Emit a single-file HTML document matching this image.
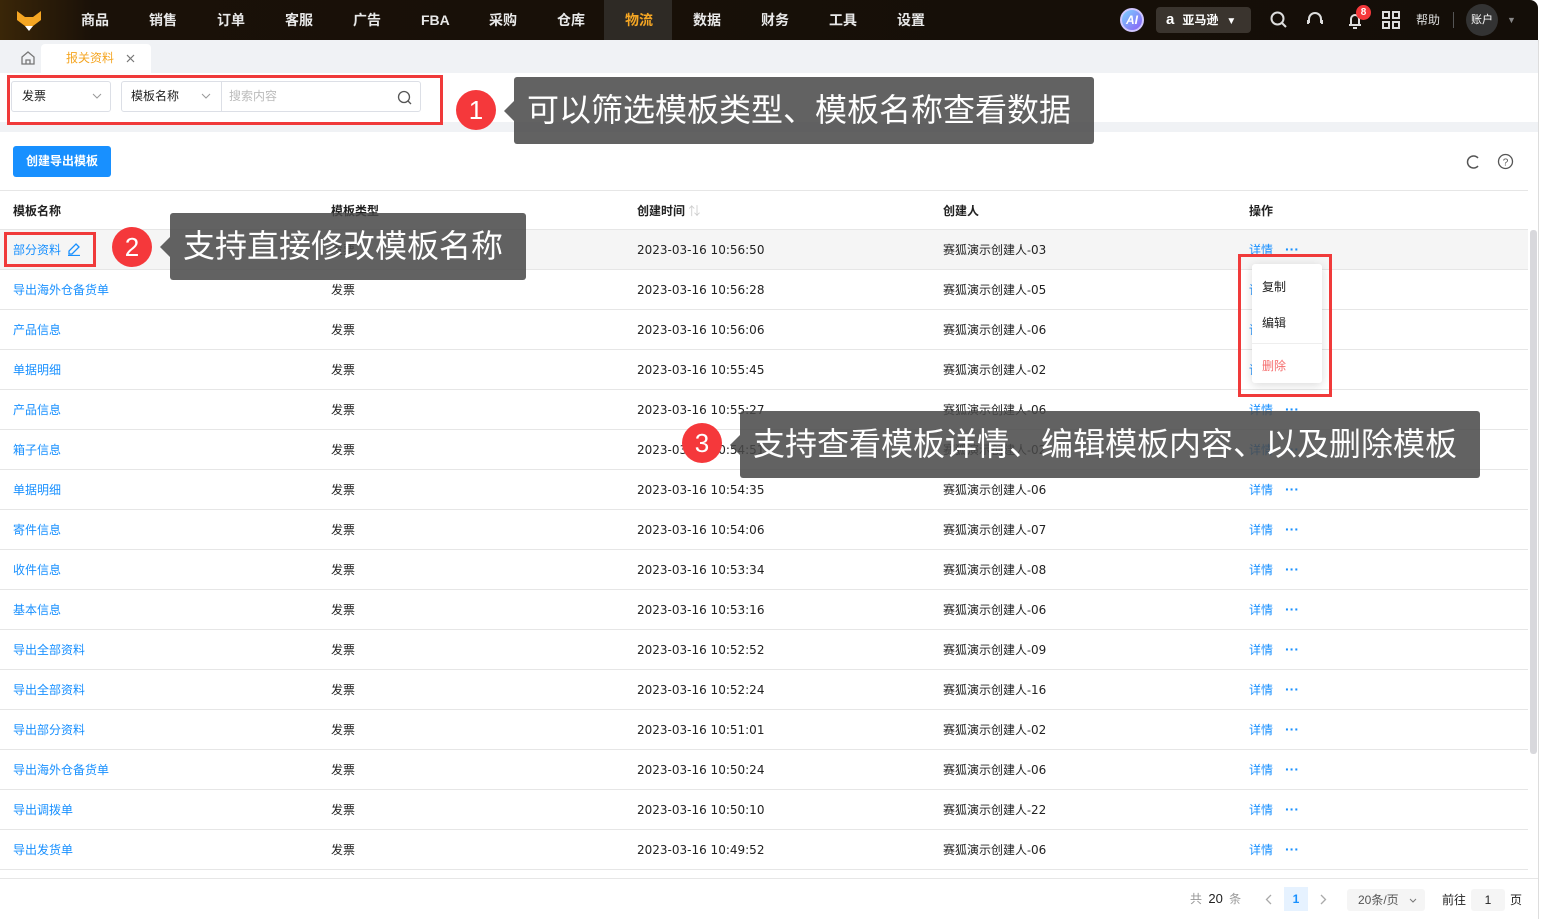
<!DOCTYPE html>
<html><head><meta charset="utf-8"><style>
*{margin:0;padding:0;box-sizing:border-box}
body{width:1545px;height:919px;overflow:hidden;background:#fff;font-family:"Liberation Sans","Noto Sans CJK SC",sans-serif;font-size:12px;color:#222;position:relative}
.abs{position:absolute}
.nav{left:0;top:0;width:1538px;height:40px;background:linear-gradient(90deg,#3a2608 0,#1a1108 6%,#140e08 100%);border-top-right-radius:8px}
.nav .it{position:absolute;top:0;height:40px;line-height:40px;color:#e8e8e8;font-size:14px;font-weight:bold}
.tabbar{left:0;top:40px;width:1538px;height:33px;background:#f0f2f5}
.row{position:absolute;left:0;width:1528px;height:40px;border-bottom:1px solid #e6e6e6;line-height:40px;font-size:12px}
.row span{position:absolute;top:0}
.dt{font-family:"DejaVu Sans",sans-serif;font-size:12px}
.lnk{color:#1890ff}
.tip{position:absolute;background:rgba(72,72,72,0.86);color:#fff;font-size:32px;border-radius:3px;white-space:nowrap}
.tip:before{content:"";position:absolute;left:-10px;top:50%;margin-top:-10px;border:10px solid transparent;border-left:0;border-right-color:rgba(72,72,72,0.86)}
.num{position:absolute;width:40px;height:40px;border-radius:50%;background:#f5383b;color:#fff;font-size:26px;text-align:center;line-height:40px}
.redbox{position:absolute;border:3px solid #f03a3a}
</style></head><body>
<div class="abs nav">
  <svg class="abs" style="left:16px;top:10px" width="26" height="22" viewBox="0 0 26 22"><path d="M1 1 L9 7 L17 7 L25 1 L25 10 L13 19 L1 10Z" fill="#f5a623"/><path d="M9 16 L13 21 L17 16Z" fill="#fff"/></svg>
  <div class="it" style="left:81px">商品</div><div class="it" style="left:149px">销售</div><div class="it" style="left:217px">订单</div><div class="it" style="left:285px">客服</div><div class="it" style="left:353px">广告</div><div class="it" style="left:421px">FBA</div><div class="it" style="left:489px">采购</div><div class="it" style="left:557px">仓库</div>
  <div class="abs" style="left:604px;top:0;width:68px;height:40px;background:#2e2a25"></div>
  <div class="it" style="left:625px;color:#f5a623">物流</div><div class="it" style="left:693px">数据</div><div class="it" style="left:761px">财务</div><div class="it" style="left:829px">工具</div><div class="it" style="left:897px">设置</div>
  <div class="abs" style="left:1120px;top:8px;width:24px;height:24px;border-radius:50%;background:linear-gradient(135deg,#7bd3ff,#8a5cf6);color:#fff;font-weight:bold;font-style:italic;font-size:12px;text-align:center;line-height:20px;border:2px solid #cfc6ff">AI</div>
  <div class="abs" style="left:1156px;top:7px;width:95px;height:26px;background:#3a342e;border-radius:4px;color:#fff;font-size:12px;line-height:26px;font-weight:bold"><span style="margin-left:10px;font-size:15px">a</span><span style="margin-left:8px">亚马逊</span><span style="margin-left:8px;font-size:10px">▼</span></div>
  <svg class="abs" style="left:1270px;top:11px" width="18" height="18" viewBox="0 0 18 18" fill="none" stroke="#ddd" stroke-width="2"><circle cx="7.5" cy="7.5" r="6"/><path d="M12 12 L16 16"/></svg>
  <svg class="abs" style="left:1305px;top:10px" width="20" height="20" viewBox="0 0 20 20" fill="none" stroke="#ddd" stroke-width="2"><path d="M4 13 V9 a6 6 0 0 1 12 0 V13"/><path d="M3 10 v4 M17 10 v4"/></svg>
  <svg class="abs" style="left:1345px;top:10px" width="20" height="20" viewBox="0 0 20 20" fill="none" stroke="#ddd" stroke-width="2"><path d="M4 15 h12 M6 15 V9 a4 4 0 0 1 8 0 V15 M8 18 h4"/></svg>
  <div class="abs" style="left:1356px;top:5px;width:15px;height:15px;border-radius:50%;background:#f5383b;color:#fff;font-size:10px;text-align:center;line-height:15px;font-weight:bold">8</div>
  <svg class="abs" style="left:1382px;top:11px" width="18" height="18" viewBox="0 0 18 18" fill="none" stroke="#ddd" stroke-width="2"><rect x="1" y="1" width="6" height="6"/><rect x="11" y="1" width="6" height="6"/><rect x="1" y="11" width="6" height="6"/><rect x="11" y="11" width="6" height="6"/></svg>
  <div class="abs" style="left:1416px;top:0;line-height:40px;color:#ddd;font-size:12px">帮助</div>
  <div class="abs" style="left:1453px;top:12px;width:1px;height:16px;background:#555"></div>
  <div class="abs" style="left:1466px;top:4px;width:32px;height:32px;border-radius:50%;background:#333;color:#fff;font-size:11px;text-align:center;line-height:32px">账户</div>
  <div class="abs" style="left:1507px;top:0;line-height:40px;color:#888;font-size:9px">▼</div>
</div>
<div class="abs tabbar">
  <svg class="abs" style="left:21px;top:11px" width="14" height="14" viewBox="0 0 14 14" fill="none" stroke="#777" stroke-width="1.3"><path d="M1 6 L7 1 L13 6 V13 H1Z M5 13 V9 H9 V13"/></svg>
  <div class="abs" style="left:41px;top:4px;width:110px;height:29px;background:#fff;border-radius:4px 4px 0 0"></div>
  <div class="abs" style="left:66px;top:4px;line-height:29px;color:#f5a623;font-size:12px">报关资料</div>
  <svg class="abs" style="left:126px;top:14px" width="9" height="9" viewBox="0 0 9 9" stroke="#777" stroke-width="1.2"><path d="M1 1 L8 8 M8 1 L1 8"/></svg>
</div>
<div class="abs" style="left:0;top:122px;width:1538px;height:10px;background:#f0f2f5"></div>
<div class="abs" style="left:1538px;top:40px;width:7px;height:879px;background:#fff;border-left:1px solid #ddd"></div>
<!-- filters -->
<div class="abs" style="left:11px;top:81px;width:100px;height:31px;border:1px solid #dcdfe6;border-radius:3px;line-height:29px;padding-left:10px">发票</div>
<svg class="abs" style="left:92px;top:93px" width="10" height="6" viewBox="0 0 10 6" fill="none" stroke="#999"><path d="M1 1 L5 5 L9 1"/></svg>
<div class="abs" style="left:121px;top:81px;width:300px;height:31px;border:1px solid #dcdfe6;border-radius:3px;line-height:29px"><span style="position:absolute;left:9px">模板名称</span><span style="position:absolute;left:99px;top:0;width:1px;height:29px;background:#dcdfe6"></span><span style="position:absolute;left:107px;color:#bbb">搜索内容</span></div>
<svg class="abs" style="left:201px;top:93px" width="10" height="6" viewBox="0 0 10 6" fill="none" stroke="#999"><path d="M1 1 L5 5 L9 1"/></svg>
<svg class="abs" style="left:397px;top:90px" width="16" height="16" viewBox="0 0 16 16" fill="none" stroke="#555" stroke-width="1.3"><circle cx="7" cy="7" r="5.5"/><path d="M11 11 L14 14"/></svg>
<div class="redbox" style="left:7px;top:75px;width:436px;height:50px"></div>
<!-- toolbar -->
<div class="abs" style="left:13px;top:146px;width:98px;height:31px;background:#1890ff;border-radius:3px;color:#fff;text-align:center;line-height:31px;font-weight:bold">创建导出模板</div>
<svg class="abs" style="left:1465px;top:154px" width="16" height="16" viewBox="0 0 16 16" fill="none" stroke="#555" stroke-width="1.5"><path d="M13 4 A6 6 0 1 0 13 12"/></svg>
<svg class="abs" style="left:1497px;top:153px" width="17" height="17" viewBox="0 0 17 17" fill="none" stroke="#555" stroke-width="1.3"><circle cx="8.5" cy="8.5" r="7"/><text x="8.5" y="12.5" font-size="10" text-anchor="middle" fill="#555" stroke="none" font-family="Liberation Sans">?</text></svg>
<!-- table -->
<div class="row" style="top:190px;border-top:1px solid #e6e6e6;font-weight:bold;height:40px"><span style="left:13px">模板名称</span><span style="left:331px">模板类型</span><span style="left:637px">创建时间 <span style="position:static;color:#ccc;font-weight:normal">⇅</span></span><span style="left:943px">创建人</span><span style="left:1249px">操作</span></div>
<div id="rows"></div>
<div class="abs" style="left:1530px;top:230px;width:7px;height:524px;background:#d8d8dc;border-radius:3px"></div>
<div class="abs" style="left:0;top:878px;width:1538px;height:1px;background:#e6e6e6"></div>
<!-- pagination -->
<div class="abs" style="left:1190px;top:890px;line-height:18px;color:#999">共 <span style="color:#222;margin:0 3px;font-size:13px">20</span> 条</div>
<svg class="abs" style="left:1265px;top:894px" width="7" height="11" viewBox="0 0 7 11" fill="none" stroke="#aaa" stroke-width="1.3"><path d="M6 1 L1.5 5.5 L6 10"/></svg>
<div class="abs" style="left:1284px;top:887px;width:24px;height:24px;background:#e6f2ff;color:#1890ff;text-align:center;line-height:24px;font-weight:bold">1</div>
<svg class="abs" style="left:1320px;top:894px" width="7" height="11" viewBox="0 0 7 11" fill="none" stroke="#aaa" stroke-width="1.3"><path d="M1 1 L5.5 5.5 L1 10"/></svg>
<div class="abs" style="left:1347px;top:889px;width:78px;height:22px;background:#f5f5f5;border-radius:3px;color:#555;line-height:22px;padding-left:11px">20条/页</div>
<svg class="abs" style="left:1409px;top:898px" width="8" height="5" viewBox="0 0 8 5" fill="none" stroke="#777"><path d="M1 1 L4 4 L7 1"/></svg>
<div class="abs" style="left:1442px;top:889px;line-height:22px">前往</div>
<div class="abs" style="left:1471px;top:889px;width:34px;height:22px;background:#f5f5f5;border-radius:3px;text-align:center;line-height:22px">1</div>
<div class="abs" style="left:1510px;top:889px;line-height:22px">页</div>
<!-- dropdown -->
<div class="abs" style="left:1252px;top:264px;width:70px;height:119px;background:#fff;border-radius:3px;box-shadow:0 2px 10px rgba(0,0,0,0.15)">
  <div class="abs" style="left:10px;top:14px">复制</div><div class="abs" style="left:10px;top:50px">编辑</div>
  <div class="abs" style="left:0;top:79px;width:70px;height:1px;background:#eee"></div>
  <div class="abs" style="left:10px;top:93px;color:#f56c6c">删除</div>
</div>
<div class="redbox" style="left:1238px;top:254px;width:94px;height:143px"></div>
<div class="redbox" style="left:4px;top:232px;width:92px;height:35px"></div>
<!-- tips -->
<div class="num" style="left:456px;top:90px">1</div>
<div class="tip" style="left:514px;top:77px;width:580px;height:67px;line-height:67px;padding-left:13px">可以筛选模板类型、模板名称查看数据</div>
<div class="num" style="left:112px;top:227px">2</div>
<div class="tip" style="left:170px;top:213px;width:356px;height:67px;line-height:67px;padding-left:13px">支持直接修改模板名称</div>
<div class="num" style="left:682px;top:423px">3</div>
<div class="tip" style="left:740px;top:411px;width:740px;height:67px;line-height:67px;padding-left:13px">支持查看模板详情、编辑模板内容、以及删除模板</div>
<script>
var d=[["部分资料","10:56:50","03"],["导出海外仓备货单","10:56:28","05"],["产品信息","10:56:06","06"],["单据明细","10:55:45","02"],["产品信息","10:55:27","06"],["箱子信息","10:54:51","02"],["单据明细","10:54:35","06"],["寄件信息","10:54:06","07"],["收件信息","10:53:34","08"],["基本信息","10:53:16","06"],["导出全部资料","10:52:52","09"],["导出全部资料","10:52:24","16"],["导出部分资料","10:51:01","02"],["导出海外仓备货单","10:50:24","06"],["导出调拨单","10:50:10","22"],["导出发货单","10:49:52","06"]];
var h="";d.forEach(function(r,i){var t=230+i*40;
h+='<div class="row" style="top:'+t+'px;'+(i==0?'background:#f5f5f5':'')+'"><span class="lnk" style="left:13px">'+r[0]+(i==0?' <svg width="14" height="14" viewBox="0 0 14 14" fill="none" stroke="#1890ff" stroke-width="1.3" style="vertical-align:-2px;margin-left:3px"><path d="M9 2 L12 5 L5 12 H2 V9Z M1 13.5 H13"/></svg>':'')+'</span><span style="left:331px">发票</span><span class="dt" style="left:637px">2023-03-16 '+r[1]+'</span><span style="left:943px">赛狐演示创建人-<span class="dt" style="position:static">'+r[2]+'</span></span><span class="lnk" style="left:1249px">详情</span><span class="lnk" style="left:1285px;font-weight:bold;font-size:14px;line-height:38px">···</span></div>';});
document.getElementById("rows").innerHTML=h;
</script>
</body></html>
